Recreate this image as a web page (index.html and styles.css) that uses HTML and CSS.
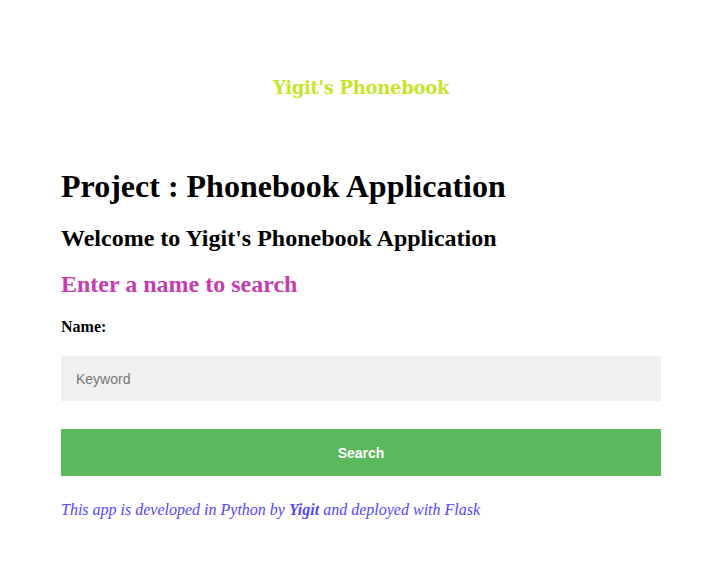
FILE: index.html
```html
<!DOCTYPE html>
<html>
<head>
<meta charset="utf-8">
<link rel="stylesheet" href="styles.css">
</head>
<body>
<header class="top">
  <div class="brand">Yigit's Phonebook</div>
</header>
<main class="wrap">
  <h1 class="h1">Project : Phonebook Application</h1>
  <h2 class="h2">Welcome to Yigit's Phonebook Application</h2>
  <h3 class="h3">Enter a name to search</h3>
  <form class="form">
    <label class="label" for="kw">Name:</label>
    <input class="input" id="kw" type="text" placeholder="Keyword">
    <button class="btn" type="button">Search</button>
  </form>
  <p class="foot">This app is developed in Python by <b>Yigit</b> and deployed with Flask</p>
</main>
</body>
</html>
```
FILE: styles.css
```css
html, body { margin: 0; padding: 0; background: #fff; }
body { font-family: "Liberation Serif", "Times New Roman", serif; color: #000; }
.top { display: flex; justify-content: center; padding: 76px 0 0 5px; }
.brand { font-family: "DejaVu Serif", Georgia, serif; font-weight: bold; font-size: 18px; color: #c3e62a; letter-spacing: -0.3px; line-height: 24px; }
.wrap { width: 600px; margin: 0 0 0 61px; padding-top: 66px; }
.h1 { font-size: 32px; font-weight: bold; margin: 0; line-height: 40px; }
.h2 { font-size: 24px; font-weight: bold; margin: 17px 0 0; line-height: 30px; }
.h3 { font-size: 24px; font-weight: bold; margin: 16px 0 0; line-height: 30px; color: #c53db0; }
.form { display: flex; flex-direction: column; margin-top: 18px; }
.label { font-weight: bold; font-size: 16px; line-height: 20px; }
.input { margin-top: 19px; height: 45px; box-sizing: border-box; border: none; background: #f0f0f0; padding: 0 15px; font-family: "Liberation Sans", Arial, sans-serif; font-size: 14px; color: #333; outline: none; }
.input::placeholder { color: #777; }
.btn { margin-top: 28px; height: 47px; border: none; background: #5cb85c; color: #fff; font-family: "Liberation Sans", Arial, sans-serif; font-size: 14px; font-weight: bold; }
.foot { margin: 24px 0 0; font-style: italic; font-size: 16px; color: #5246ff; font-family: "Liberation Serif", Georgia, serif; line-height: 20px; }
```
